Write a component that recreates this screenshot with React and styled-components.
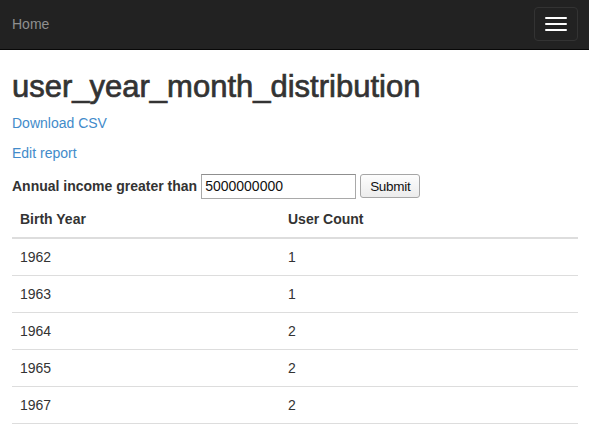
import React from 'react';
import styled, { createGlobalStyle } from 'styled-components';

const GlobalStyle = createGlobalStyle`
  * {
    box-sizing: border-box;
  }
  body {
    margin: 0;
    background: #fff;
    color: #333;
    font-family: 'Liberation Sans', Arial, sans-serif;
    font-size: 14px;
    line-height: 20px;
  }
`;

const Navbar = styled.nav`
  display: flex;
  align-items: center;
  justify-content: space-between;
  height: 50px;
  padding: 0 11px 0 12px;
  background: #222;
  border-bottom: 1px solid #080808;
`;

const Brand = styled.a`
  color: #8f8f8f;
  font-size: 14px;
  text-decoration: none;
  margin-top: -1px;
`;

const Toggle = styled.button`
  display: flex;
  flex-direction: column;
  justify-content: center;
  gap: 4px;
  width: 44px;
  height: 34px;
  padding: 0 10px;
  margin-bottom: 1px;
  background: transparent;
  border: 1px solid #333;
  border-radius: 4px;
`;

const Bar = styled.span`
  display: block;
  width: 22px;
  height: 2px;
  border-radius: 1px;
  background: #fff;
`;

const Container = styled.main`
  padding: 0 11px 0 12px;
`;

const Title = styled.h1`
  margin: 20px 0 9px;
  font-size: 31px;
  font-weight: 400;
  line-height: 34px;
  color: #333;
  -webkit-text-stroke: 0.7px #333;
`;

const Para = styled.p`
  margin: 0 0 10px;
`;

const Link = styled.a`
  color: #428bca;
  text-decoration: none;
`;

const Form = styled.form`
  display: flex;
  align-items: center;
  height: 26px;
  margin-bottom: 2px;
`;

const Label = styled.label`
  font-weight: 700;
  margin-right: 4px;
`;

const Input = styled.input`
  width: 155px;
  height: 25px;
  padding: 1px 3px;
  border: 1px solid #a9a9a9;
  border-top-color: #8f8f8f;
  font-family: 'Liberation Sans', Arial, sans-serif;
  font-size: 14px;
  color: #111;
`;

const Button = styled.button`
  height: 24px;
  margin-left: 4px;
  padding: 0 9px;
  border: 1px solid #a6a6a6;
  border-radius: 3px;
  background: linear-gradient(#fdfdfd, #ececec);
  font-family: 'Liberation Sans', Arial, sans-serif;
  font-size: 13.5px;
  letter-spacing: -0.3px;
  color: #111;
`;

const Table = styled.table`
  width: 100%;
  border-collapse: collapse;
  border-spacing: 0;
`;

const Th = styled.th`
  padding: 8px;
  text-align: left;
  font-weight: 700;
  border-bottom: 2px solid #ddd;
  &:first-child {
    width: 268px;
  }
`;

const Td = styled.td`
  padding: 8px;
  border-bottom: 1px solid #ddd;
`;

const rows = [
  ['1962', 1],
  ['1963', 1],
  ['1964', 2],
  ['1965', 2],
  ['1967', 2],
];

export default function App() {
  return (
    <>
      <GlobalStyle />
      <Navbar>
        <Brand href="#">Home</Brand>
        <Toggle type="button" aria-label="Toggle navigation">
          <Bar />
          <Bar />
          <Bar />
        </Toggle>
      </Navbar>
      <Container>
        <Title>user_year_month_distribution</Title>
        <Para>
          <Link href="#">Download CSV</Link>
        </Para>
        <Para>
          <Link href="#">Edit report</Link>
        </Para>
        <Form onSubmit={(e) => e.preventDefault()}>
          <Label htmlFor="income">Annual income greater than</Label>
          <Input id="income" defaultValue="5000000000" />
          <Button type="submit">Submit</Button>
        </Form>
        <Table>
          <thead>
            <tr>
              <Th>Birth Year</Th>
              <Th>User Count</Th>
            </tr>
          </thead>
          <tbody>
            {rows.map(([year, count]) => (
              <tr key={year}>
                <Td>{year}</Td>
                <Td>{count}</Td>
              </tr>
            ))}
          </tbody>
        </Table>
      </Container>
    </>
  );
}
